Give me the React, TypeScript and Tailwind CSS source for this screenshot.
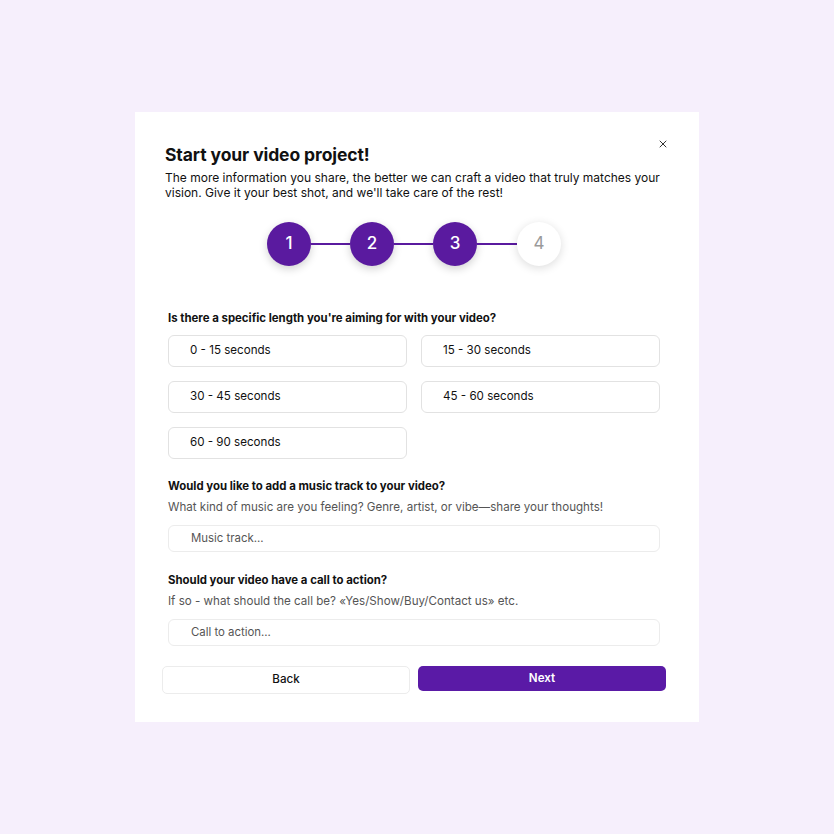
import { X } from "lucide-react";

const durations = [
  "0 - 15 seconds",
  "15 - 30 seconds",
  "30 - 45 seconds",
  "45 - 60 seconds",
  "60 - 90 seconds",
];

function Step({ n, done }: { n: number; done: boolean }) {
  return (
    <div
      className={
        done
          ? "w-[44px] h-[44px] rounded-full bg-[#5a1a9f] text-white flex items-center justify-center text-[17px] font-medium shadow-[0_3px_8px_rgba(0,0,0,0.18)]"
          : "w-[44px] h-[44px] rounded-full bg-white text-[#9a9a9a] flex items-center justify-center text-[17px] shadow-[0_2px_10px_rgba(0,0,0,0.14)]"
      }
    >
      {n}
    </div>
  );
}

export default function App() {
  return (
    <div
      className="w-[834px] h-[834px] bg-[#f6effc] pt-[112px] pl-[135px]"
      style={{ fontFamily: "Inter, 'Noto Sans', sans-serif" }}
    >
      <div className="relative w-[564px] h-[610px] bg-white pt-[31px]">
        <button className="absolute top-[26px] right-[30px] text-[#333]">
          <X className="w-[12px] h-[12px]" strokeWidth={2} />
        </button>

        <div className="px-[30px]">
          <h1 className="text-[17.5px] font-bold text-[#111] leading-[24px] tracking-[-0.1px]">
            Start your video project!
          </h1>
          <p className="mt-[4px] text-[12px] leading-[14.5px] text-[#111] whitespace-nowrap">
            The more information you share, the better we can craft a video that truly matches your
            <br />
            vision. Give it your best shot, and we'll take care of the rest!
          </p>
        </div>

        <div className="mt-[22px] flex items-center justify-center pr-[6px]">
          <Step n={1} done />
          <div className="w-[39px] h-[2px] bg-[#5a1a9f]" />
          <Step n={2} done />
          <div className="w-[39px] h-[2px] bg-[#5a1a9f]" />
          <Step n={3} done />
          <div className="w-[40px] h-[2px] bg-[#5a1a9f]" />
          <Step n={4} done={false} />
        </div>

        <div className="pl-[33px] pr-[39px] mt-[45px]">
          <div className="text-[11.4px] font-bold text-[#111] leading-[14px]">
            Is there a specific length you're aiming for with your video?
          </div>
          <div className="mt-[10px] grid grid-cols-2 gap-x-[14px] gap-y-[14px]">
            {durations.map((d) => (
              <div
                key={d}
                className="h-[32px] rounded-[6px] border-[1.5px] border-[#e2e2e2] flex items-center pl-[21px] text-[11.6px] text-[#111]"
              >
                {d}
              </div>
            ))}
          </div>

          <div className="mt-[20px] text-[11.4px] font-bold text-[#111] leading-[14px]">
            Would you like to add a music track to your video?
          </div>
          <div className="mt-[7px] text-[11.6px] text-[#555] leading-[14px]">
            What kind of music are you feeling? Genre, artist, or vibe—share your thoughts!
          </div>
          <div className="mt-[11px] h-[27px] rounded-[6px] border-[1.5px] border-[#ececec] flex items-center pl-[22px] text-[11.4px] text-[#555]">
            Music track...
          </div>

          <div className="mt-[21px] text-[11.4px] font-bold text-[#111] leading-[14px]">
            Should your video have a call to action?
          </div>
          <div className="mt-[7px] text-[11.6px] text-[#555] leading-[14px]">
            If so - what should the call be? «Yes/Show/Buy/Contact us» etc.
          </div>
          <div className="mt-[11px] h-[27px] rounded-[6px] border-[1.5px] border-[#ececec] flex items-center pl-[22px] text-[11.4px] text-[#555]">
            Call to action...
          </div>
        </div>

        <div className="mt-[20px] pl-[27px] pr-[33px] grid grid-cols-2 gap-x-[8px] items-start">
          <button className="h-[28px] rounded-[5px] border-[1.5px] border-[#ececec] bg-white text-[11.6px] font-medium text-[#111]">
            Back
          </button>
          <button className="h-[25px] rounded-[5px] bg-[#5a1aa6] text-[11.6px] font-semibold text-white">
            Next
          </button>
        </div>
      </div>
    </div>
  );
}
